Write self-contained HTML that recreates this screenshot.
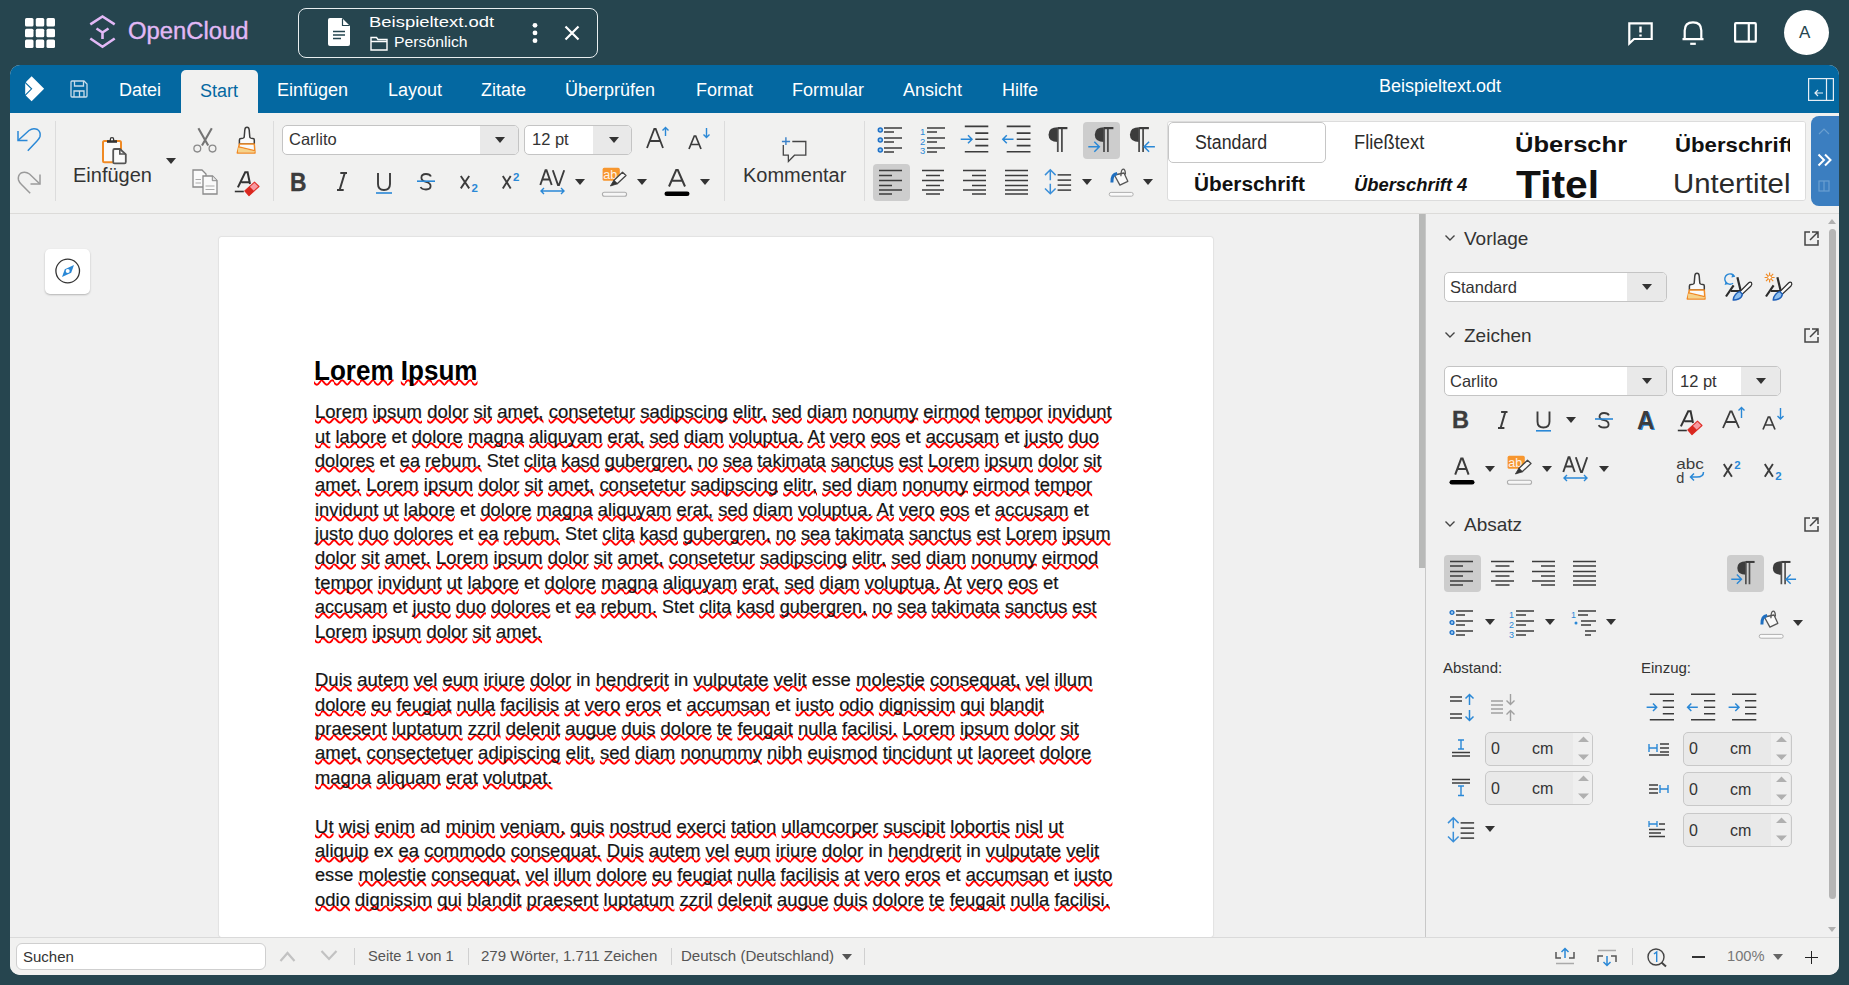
<!DOCTYPE html>
<html><head><meta charset="utf-8">
<style>
*{box-sizing:border-box;margin:0;padding:0}
html,body{width:1849px;height:985px;overflow:hidden;background:#26454f;font-family:"Liberation Sans",sans-serif;position:relative}
.a{position:absolute}
.t{position:absolute;white-space:nowrap;line-height:1}
svg{position:absolute;overflow:visible}
#frame{left:10px;top:65px;width:1829px;height:910px;border-radius:10px;overflow:hidden;background:#efefef}
#tabs{left:0;top:0;width:1829px;height:48px;background:#0468a1}
.tab{position:absolute;top:16px;font-size:18px;color:#fff;line-height:1;white-space:nowrap}
#toolbar{left:0;top:48px;width:1829px;height:100px;background:#f1f1f0;border-bottom:1px solid #d6d6d6}
.sep{position:absolute;width:1px;background:#dcdcdc}
.combo{position:absolute;background:#fff;border:1px solid #c4c4c4;border-radius:5px;overflow:hidden}
.combo .btn{position:absolute;right:0;top:0;bottom:0;background:#e9e9e9}
.tri{position:absolute;width:0;height:0;border-left:5px solid transparent;border-right:5px solid transparent;border-top:6px solid #333}
.doc{font-size:18.3px;color:#151515;-webkit-text-stroke:0.2px #151515}
.sq{text-decoration:underline wavy #f00;text-decoration-thickness:2.2px;text-underline-offset:-0.8px;text-decoration-skip-ink:none}
</style></head><body>
<!-- OpenCloud top bar -->
<svg style="left:25px;top:18px" width="30" height="30" viewBox="0 0 30 30">
<g fill="#fff">
<rect x="0" y="0" width="8.5" height="8.5" rx="1.5"/><rect x="10.75" y="0" width="8.5" height="8.5" rx="1.5"/><rect x="21.5" y="0" width="8.5" height="8.5" rx="1.5"/>
<rect x="0" y="10.75" width="8.5" height="8.5" rx="1.5"/><rect x="10.75" y="10.75" width="8.5" height="8.5" rx="1.5"/><rect x="21.5" y="10.75" width="8.5" height="8.5" rx="1.5"/>
<rect x="0" y="21.5" width="8.5" height="8.5" rx="1.5"/><rect x="10.75" y="21.5" width="8.5" height="8.5" rx="1.5"/><rect x="21.5" y="21.5" width="8.5" height="8.5" rx="1.5"/>
</g></svg>
<svg style="left:89px;top:15px" width="27" height="34" viewBox="0 0 27 34">
<g fill="none" stroke="#e2b8f6" stroke-width="2.6" stroke-linejoin="miter">
<path d="M1.3 9.3 L13.5 1.5 L25.7 9.3"/>
<path d="M1.3 23.5 L13.5 31.8 L25.7 23.5"/>
<path d="M7.5 13.5 L13.5 17.5 L19.5 13.5 M13.5 17.5 L13.5 24"/>
</g></svg>
<div class="t" style="left:127.5px;top:20.3px;font-size:23px;color:#e2b8f6;-webkit-text-stroke:0.35px #e2b8f6;transform-origin:0 0;transform:scaleX(1.035)">OpenCloud</div>

<!-- file tab -->
<div class="a" style="left:298px;top:8px;width:300px;height:50px;border:1.5px solid #e8eef0;border-radius:8px"></div>
<svg style="left:328px;top:18px" width="22" height="28" viewBox="0 0 22 28">
<path d="M2 0 H14 L22 8 V26 Q22 28 20 28 H2 Q0 28 0 26 V2 Q0 0 2 0 Z" fill="#fff"/>
<path d="M14 0 V8 H22" fill="#26454f" opacity="0"/>
<path d="M14.5 0.5 L14.5 7.5 L21.5 7.5" fill="none" stroke="#26454f" stroke-width="1.2"/>
<g stroke="#26454f" stroke-width="1.6"><path d="M5 13.5 H17 M5 17 H17 M5 20.5 H13"/></g>
</svg>
<div class="t" style="left:369px;top:14px;font-size:15px;color:#fff;transform-origin:0 0;transform:scaleX(1.23)">Beispieltext.odt</div>
<svg style="left:370px;top:36px" width="18" height="15" viewBox="0 0 18 15">
<path d="M1 1.5 H6.5 L8 3.5 H17 V14 H1 Z M1 5.5 H17" fill="none" stroke="#fff" stroke-width="1.4"/>
</svg>
<div class="t" style="left:394px;top:34px;font-size:15px;color:#fff;transform-origin:0 0;transform:scaleX(1.05)">Persönlich</div>
<svg style="left:530px;top:21px" width="10" height="24" viewBox="0 0 10 24">
<g fill="#fff"><circle cx="5" cy="4.3" r="2.4"/><circle cx="5" cy="11.9" r="2.4"/><circle cx="5" cy="19.7" r="2.4"/></g>
</svg>
<svg style="left:564px;top:25px" width="16" height="16" viewBox="0 0 16 16">
<path d="M1.5 1.5 L14.5 14.5 M14.5 1.5 L1.5 14.5" stroke="#fff" stroke-width="2.2" fill="none"/>
</svg>

<!-- right icons -->
<svg style="left:1628px;top:22px" width="25" height="23" viewBox="0 0 25 23">
<path d="M1.3 1.3 H23.7 V17 H6 L1.3 21.5 Z" fill="none" stroke="#fff" stroke-width="2.2" stroke-linejoin="miter"/>
<path d="M12.5 4.5 V10.5 M12.5 12.5 V14.5" stroke="#fff" stroke-width="2.4"/>
</svg>
<svg style="left:1681px;top:21px" width="24" height="25" viewBox="0 0 24 25">
<path d="M3.7 18.2 V9.5 Q3.7 1.3 12 1.3 Q20.3 1.3 20.3 9.5 V18.2 M1.5 18.2 H22.5" fill="none" stroke="#fff" stroke-width="2.2"/>
<path d="M9.2 22.8 H14.8" stroke="#fff" stroke-width="2.2"/>
</svg>
<svg style="left:1734px;top:22px" width="24" height="22" viewBox="0 0 24 22">
<rect x="1.1" y="1.1" width="20.7" height="18.6" rx="0.8" fill="none" stroke="#fff" stroke-width="2.2"/>
<path d="M14.8 1 V20" stroke="#fff" stroke-width="2.2"/>
</svg>
<div class="a" style="left:1784px;top:10px;width:45px;height:45px;border-radius:50%;background:#fff"></div>
<div class="t" style="left:1799px;top:24px;font-size:17px;color:#26454f">A</div>
<!-- frame backgrounds -->
<div class="a" style="left:10px;top:65px;width:1829px;height:910px;border-radius:10px;background:#f0f0f0"></div>
<div class="a" style="left:10px;top:65px;width:1829px;height:48px;border-radius:10px 10px 0 0;background:#0468a1"></div>
<div class="a" style="left:10px;top:113px;width:1829px;height:101px;background:#f1f1f0;border-bottom:1px solid #dcdbd9"></div>
<!-- collabora logo -->
<svg style="left:24px;top:75px" width="22" height="28" viewBox="0 0 22 28">
<path d="M7.6 1.3 L20.1 13.8 L7.6 26.3 L1.2 19.9 V7.7 Z" fill="#fff"/>
<path d="M0.6 6.8 L7.6 13.8 L0.6 20.8" fill="none" stroke="#0468a1" stroke-width="1.1"/>
</svg>
<!-- save icon -->
<svg style="left:70px;top:80px" width="18" height="18" viewBox="0 0 18 18">
<path d="M1 2 Q1 1 2 1 H14 L17 4 V16 Q17 17 16 17 H2 Q1 17 1 16 Z" fill="none" stroke="#c9dcea" stroke-width="1.3"/>
<path d="M4.5 1 V6 H13.5 V1 M4 17 V11 H14 V17 M9.5 11.5 V17" fill="none" stroke="#c9dcea" stroke-width="1.3"/>
</svg>
<div class="tab" style="left:119px;top:81px">Datei</div>
<div class="a" style="left:181px;top:70px;width:77px;height:43px;background:#f1f1f0;border-radius:5px 5px 0 0"></div>
<div class="tab" style="left:200px;top:82px;color:#0468a1">Start</div>
<div class="tab" style="left:277px;top:81px">Einfügen</div>
<div class="tab" style="left:388px;top:81px">Layout</div>
<div class="tab" style="left:481px;top:81px">Zitate</div>
<div class="tab" style="left:565px;top:81px">Überprüfen</div>
<div class="tab" style="left:696px;top:81px">Format</div>
<div class="tab" style="left:792px;top:81px">Formular</div>
<div class="tab" style="left:903px;top:81px">Ansicht</div>
<div class="tab" style="left:1002px;top:81px">Hilfe</div>
<div class="tab" style="left:1379px;top:77px">Beispieltext.odt</div>
<!-- sidebar toggle -->
<svg style="left:1808px;top:78px" width="26" height="23" viewBox="0 0 26 23">
<rect x="0.6" y="0.6" width="24.8" height="21.8" fill="none" stroke="#e6eef5" stroke-width="1.2"/>
<path d="M18.5 0.6 V22.4" stroke="#e6eef5" stroke-width="1.2"/>
<path d="M15 15 H7 M10 12 L7 15 L10 18" fill="none" stroke="#e6eef5" stroke-width="1.2"/>
</svg>
<!-- undo / redo -->
<svg style="left:17px;top:128px" width="25" height="24" viewBox="0 0 25 24">
<path d="M1 3 V12.5 H10.5" fill="none" stroke="#2a88d6" stroke-width="1.5"/>
<path d="M1.3 12.2 L12 2.5 Q16 -0.5 20.5 1.5 Q24 4 23 8.5 Q22.3 10.8 20 13 L10.8 22.8" fill="none" stroke="#2a88d6" stroke-width="1.5"/>
</svg>
<svg style="left:17px;top:171px" width="25" height="23" viewBox="0 0 25 23">
<path d="M23 3.5 V13 H13.5" fill="none" stroke="#9a9a9a" stroke-width="1.5"/>
<path d="M22.7 12.7 L12.5 3 Q8.5 0 4 2 Q0.6 4.5 1.5 9 Q2.2 11.3 4.5 13.5 L13.2 22.3" fill="none" stroke="#9a9a9a" stroke-width="1.5"/>
</svg>
<div class="sep" style="left:55px;top:121px;height:80px"></div>
<!-- paste -->
<svg style="left:96px;top:132px" width="34" height="34" viewBox="0 0 34 34">
<rect x="7" y="9" width="18" height="21.3" rx="1.5" fill="#fafafa" stroke="#f08a24" stroke-width="2"/>
<rect x="11" y="8.2" width="10" height="2.6" fill="#333"/>
<circle cx="16" cy="7.4" r="1.7" fill="#fafafa" stroke="#333" stroke-width="1.3"/>
<path d="M18.6 17 H23.9 L29.8 22.3 V30 Q29.8 31.4 28.4 31.4 H18.6 Q17.2 31.4 17.2 30 V18.4 Q17.2 17 18.6 17 Z" fill="#fafafa" stroke="#555" stroke-width="1.8"/>
<path d="M23.8 17 V22 H29.8" fill="none" stroke="#555" stroke-width="1.6"/>
</svg>
<div class="t" style="left:73px;top:165px;font-size:20px;color:#333">Einfügen</div>
<div class="tri" style="left:166px;top:158px;border-top-color:#333"></div>
<!-- cut -->
<svg style="left:188px;top:122px" width="34" height="34" viewBox="0 0 34 34">
<path d="M10.4 6.2 L20.2 23.6 M23.8 6.2 L14 23.4" fill="none" stroke="#747474" stroke-width="2.1"/>
<circle cx="9.3" cy="26.6" r="3.4" fill="none" stroke="#8a8a8a" stroke-width="1.3"/>
<circle cx="24.5" cy="26.6" r="3.4" fill="none" stroke="#8a8a8a" stroke-width="1.3"/>
</svg>
<!-- clone brush -->
<svg style="left:236px;top:125.5px" width="20" height="28" viewBox="0 0 20 28">
<path d="M8.2 11 Q8.5 8 8.8 4 Q9 1.3 11 1.3 Q13 1.3 13.2 4 Q13.5 8 13.8 11 Q14 12.5 17 12.5 Q18.3 12.5 18.3 14 V18 H3.4 V14 Q3.4 12.5 5 12.5 Q8 12.5 8.2 11 Z" fill="#fafafa" stroke="#3c3c3c" stroke-width="1.5" stroke-linejoin="round"/>
<path d="M3.4 18 H18.3 L19 27 H1.3 Z" fill="#fafafa" stroke="#f08a24" stroke-width="1.5" stroke-linejoin="round"/>
<path d="M2.2 21.5 L18.6 25 L18.8 26.3 H2 Z" fill="#f6d38a"/>
<path d="M2.8 20.8 L18.6 24.6" stroke="#f08a24" stroke-width="1.3"/>
</svg>
<!-- copy -->
<svg style="left:192px;top:169px" width="27" height="27" viewBox="0 0 27 27">
<path d="M1 1 H10 L14 5 V18 H1 Z" fill="#fafafa" stroke="#8a8a8a" stroke-width="1.3"/>
<path d="M3.5 10.5 H9 M3.5 14 H9" stroke="#aaa" stroke-width="1.2"/>
<path d="M11 7 H20.5 L25 11.5 V25 H11 Z" fill="#fafafa" stroke="#8a8a8a" stroke-width="1.3"/>
<path d="M20.3 7 V11.7 H25" fill="#e6e6e6" stroke="#8a8a8a" stroke-width="1"/>
<path d="M13.5 17 H22.5 M13.5 20.5 H22.5" stroke="#aaa" stroke-width="1.2"/>
</svg>
<!-- clear formatting -->
<svg style="left:230px;top:166px" width="34" height="34" viewBox="0 0 34 34">
<path d="M7.9 21.4 L15.2 6.2 H17.6 L20 18 M11.4 16.2 H19.7" fill="none" stroke="#333" stroke-width="2"/>
<path d="M4.8 25.5 H13.8" stroke="#333" stroke-width="1.6"/>
<path d="M14.8 24.9 L24.5 16.2 L29 20.5 L19 29.7 Z" fill="#f79aa0" stroke="#e0302a" stroke-width="1.1" stroke-linejoin="round"/>
<path d="M14.8 24.9 L19.6 20.6 L24 25.1 L19 29.7 Z" fill="#d9281f"/>
</svg>
<div class="sep" style="left:273px;top:121px;height:80px"></div>
<!-- font name combo -->
<div class="combo" style="left:282px;top:125px;width:237px;height:30px"><div class="btn" style="width:38px"></div></div>
<div class="tri" style="left:495px;top:137px"></div>
<div class="t" style="left:289px;top:131px;font-size:16.5px;color:#333">Carlito</div>
<!-- font size combo -->
<div class="combo" style="left:524px;top:125px;width:108px;height:30px"><div class="btn" style="width:38px"></div></div>
<div class="tri" style="left:609px;top:137px"></div>
<div class="t" style="left:532px;top:131px;font-size:16.5px;color:#333">12 pt</div>
<!-- grow / shrink -->
<svg style="left:646px;top:126px" width="23" height="23" viewBox="0 0 23 23">
<path d="M1 22 L8.3 3 H9.7 L17 22 M4 15 H14" fill="none" stroke="#3c3c3c" stroke-width="1.8"/>
<path d="M19.5 10 V1.5 M16.5 4.5 L19.5 1.5 L22.5 4.5" fill="none" stroke="#2a88d6" stroke-width="1.4"/>
</svg>
<svg style="left:688px;top:127px" width="23" height="23" viewBox="0 0 23 23">
<path d="M1 22 L6.3 9 H7.7 L13 22 M3.2 17.5 H11" fill="none" stroke="#3c3c3c" stroke-width="1.7"/>
<path d="M18.5 1 V10.5 M15.5 7.5 L18.5 10.5 L21.5 7.5" fill="none" stroke="#2a88d6" stroke-width="1.4"/>
</svg>
<!-- Bold .. -->
<div class="t" style="left:290.2px;top:169.5px;font-size:25.6px;font-weight:bold;color:#3c3c3c;-webkit-text-stroke:0.4px #3c3c3c;transform-origin:0 0;transform:scaleX(0.891)">B</div>
<svg style="left:337px;top:172px" width="10" height="19" viewBox="0 0 10 19"><path d="M7.8 1 L2.6 18.0 M3.3 1 H10.0 M0 18.0 H6.7" fill="none" stroke="#3c3c3c" stroke-width="2"/></svg>
<svg style="left:375px;top:172px" width="18" height="22" viewBox="0 0 18 22"><path d="M3 1 V12 Q3 18 9 18 Q15 18 15 12 V1" fill="none" stroke="#3c3c3c" stroke-width="1.9"/><path d="M1 21 H17" stroke="#2a88d6" stroke-width="1.6"/></svg>
<svg style="left:417px;top:173px" width="18" height="17.5" viewBox="0 0 18 17.5"><path d="M13.9 3.5 Q12.9 1 9.0 1 Q4.4 1 4.4 4.7 Q4.4 7.9 9.0 8.8 Q13.6 9.8 13.6 13.1 Q13.6 16.5 9.0 16.5 Q4.6 16.5 3.6 14.0" fill="none" stroke="#3c3c3c" stroke-width="1.8"/><path d="M0 8.2 H18" stroke="#2a88d6" stroke-width="1.6"/></svg>
<svg style="left:460px;top:176px" width="20" height="16.4" viewBox="0 0 20 16.4"><path d="M0.8 0 L9.2 12.4 M9.2 0 L0.8 12.4" fill="none" stroke="#3c3c3c" stroke-width="1.9"/><text x="11.5" y="16.2" font-family="Liberation Sans" font-weight="bold" font-size="11.5" fill="#2a88d6">2</text></svg>
<svg style="left:502px;top:176px" width="19.5" height="16.4" viewBox="0 0 19.5 16.4"><path d="M0.8 0 L8.7 12.4 M8.7 0 L0.8 12.4" fill="none" stroke="#3c3c3c" stroke-width="1.9"/><text x="11.0" y="5.2" font-family="Liberation Sans" font-weight="bold" font-size="11.5" fill="#2a88d6">2</text></svg>
<svg style="left:539px;top:169px" width="27" height="26" viewBox="0 0 27 26">
<path d="M1.3 16 L6.5 1.3 H7.5 L12.7 16 M3.4 10.5 H10.6 M13.8 1.3 L19 16 H20 L25.2 1.3" fill="none" stroke="#3c3c3c" stroke-width="1.9"/>
<path d="M2 22 H25 M5 19 L2 22 L5 25 M22 19 L25 22 L22 25" fill="none" stroke="#2a88d6" stroke-width="1.4"/>
</svg>
<div class="tri" style="left:575px;top:179px"></div>
<svg style="left:596px;top:164px" width="34" height="34" viewBox="0 0 34 34">
<rect x="6.6" y="3.8" width="17.2" height="13" rx="1.6" fill="#f7962e"/>
<text x="7.3" y="15" font-family="Liberation Sans" font-size="12.5" fill="#fdf3ea" textLength="14" lengthAdjust="spacingAndGlyphs">ab</text>
<path d="M26.5 8.2 L30 11.5 L21.2 19.8 L17.8 16.5 Z" fill="#fafafa" stroke="#444" stroke-width="1.3" stroke-linejoin="round"/>
<path d="M17.6 16.7 L21 19.9 L14.4 22 Z" fill="#333" stroke="#333" stroke-width="0.8" stroke-linejoin="round"/>
<rect x="6.4" y="28.3" width="24.2" height="4" rx="2" fill="#f6f6f6" stroke="#adadad" stroke-width="1.1"/>
</svg>
<div class="tri" style="left:637px;top:179px"></div>
<svg style="left:664px;top:169px" width="26" height="28" viewBox="0 0 26 28">
<path d="M5 17.5 L12.2 1 H13.8 L21 17.5 M8 11.8 H18" fill="none" stroke="#3c3c3c" stroke-width="2"/>
<rect x="0.5" y="22.5" width="25" height="4.6" rx="2.3" fill="#000"/>
</svg>
<div class="tri" style="left:700px;top:179px"></div>
<div class="sep" style="left:724px;top:121px;height:80px"></div>
<!-- comment -->
<svg style="left:774px;top:130px" width="40" height="36" viewBox="0 0 40 36">
<path d="M18.3 11.5 H31.8 V25.2 H20.5 L14.4 31.4 L14.3 25.2 H9.3 V15" fill="none" stroke="#444" stroke-width="1.3"/>
<path d="M11.9 7.3 V15 M7.9 11.5 H16.1" stroke="#3a80c8" stroke-width="1.4"/>
</svg>
<div class="t" style="left:743px;top:165px;font-size:20px;color:#333">Kommentar</div>
<div class="sep" style="left:864px;top:121px;height:80px"></div>
<!-- paragraph row 1 -->
<svg style="left:877px;top:126px" width="27" height="28" viewBox="0 0 27 28">
<g fill="#9ccbf2" stroke="#1f72c8" stroke-width="1.5"><circle cx="3.3" cy="4" r="2"/><circle cx="3.3" cy="14" r="2"/><circle cx="3.3" cy="24" r="2"/></g>
<g stroke="#3c3c3c" stroke-width="1.6"><path d="M7 2 H25 M7 6 H17 M7 12 H25 M7 16 H17 M7 22 H25 M7 26 H17"/></g>
</svg>
<svg style="left:920px;top:126px" width="26" height="28" viewBox="0 0 26 28">
<text x="0" y="9" font-family="Liberation Sans" font-size="9.5" fill="#2a88d6">1</text>
<text x="0" y="19" font-family="Liberation Sans" font-size="9.5" fill="#2a88d6">2</text>
<text x="0" y="28" font-family="Liberation Sans" font-size="9.5" fill="#2a88d6">3</text>
<g stroke="#3c3c3c" stroke-width="1.6"><path d="M7 2 H25 M7 6 H17 M7 12 H25 M7 16 H17 M7 22 H25 M7 26 H17"/></g>
</svg>
<svg style="left:960px;top:125px" width="29" height="29" viewBox="0 0 29 29">
<g stroke="#3c3c3c" stroke-width="1.6"><path d="M4.8 1.4 H28.3 M15.3 8.1 H28.3 M15.3 14.3 H28.3 M15.3 20.6 H28.3 M4.8 26.8 H28.3"/></g>
<path d="M0.7 14.3 H12 M8 10.3 L12 14.3 L8 18.3" fill="none" stroke="#2a88d6" stroke-width="1.5"/>
</svg>
<svg style="left:1002px;top:125px" width="29" height="29" viewBox="0 0 29 29">
<g stroke="#3c3c3c" stroke-width="1.6"><path d="M4.7 1.4 H28.5 M14.7 8.1 H28.5 M14.7 14.3 H28.5 M14.7 20.6 H28.5 M4.7 26.8 H28.5"/></g>
<path d="M0.8 14.3 H11.5 M4.8 10.3 L0.8 14.3 L4.8 18.3" fill="none" stroke="#2a88d6" stroke-width="1.5"/>
</svg>
<svg style="left:1047px;top:126px" width="28" height="28" viewBox="0 0 28 28"><path d="M10.9 1.3 Q1.5 1.3 1.5 8.7 Q1.5 16 10.9 16 Z" fill="#3c3c3c"/><path d="M10.8 2 V26.1 M14.9 2 V26.1" stroke="#4f4f4f" stroke-width="1.8"/><path d="M10.8 2.1 H20.4" stroke="#3c3c3c" stroke-width="2.2"/></svg>
<div class="a" style="left:1083px;top:122px;width:37px;height:37px;background:#cdcdcd;border-radius:4px"></div>
<svg style="left:1088px;top:126px" width="28" height="28" viewBox="0 0 28 28"><path d="M16.2 1.3 Q6.8 1.3 6.8 8.7 Q6.8 16 16.2 16 Z" fill="#3c3c3c"/><path d="M16 2 V26.1 M19.9 2 V26.1" stroke="#4f4f4f" stroke-width="1.8"/><path d="M16 2.1 H25.4" stroke="#3c3c3c" stroke-width="2.2"/><path d="M0.3 20.7 H11.3 M6.3 15.7 L11.3 20.7 L6.3 25.7" fill="none" stroke="#2a88d6" stroke-width="1.5"/></svg>
<svg style="left:1129px;top:126px" width="28" height="28" viewBox="0 0 28 28"><path d="M10.4 1.3 Q0.9 1.3 0.9 8.7 Q0.9 16 10.4 16 Z" fill="#3c3c3c"/><path d="M10.1 2 V26.1 M14.1 2 V26.1" stroke="#4f4f4f" stroke-width="1.8"/><path d="M10.1 2.1 H19.9" stroke="#3c3c3c" stroke-width="2.2"/><path d="M15.1 20.7 H25.9 M20.1 15.7 L15.1 20.7 L20.1 25.7" fill="none" stroke="#2a88d6" stroke-width="1.5"/></svg>
<!-- paragraph row 2 -->
<div class="a" style="left:873px;top:164px;width:37px;height:37px;background:#cdcdcd;border-radius:4px"></div>
<svg style="left:878px;top:169px" width="25" height="26" viewBox="0 0 25 26">
<g stroke="#3c3c3c" stroke-width="1.7"><path d="M1 1.5 H24 M1 6.5 H14 M1 11.5 H24 M1 16.5 H14 M1 21 H24 M1 25 H14"/></g>
</svg>
<svg style="left:921px;top:169px" width="24" height="26" viewBox="0 0 24 26">
<g stroke="#3c3c3c" stroke-width="1.7"><path d="M1 1.5 H23 M5 6.5 H19 M1 11.5 H23 M5 16.5 H19 M1 21 H23 M5 25 H19"/></g>
</svg>
<svg style="left:962px;top:169px" width="25" height="26" viewBox="0 0 25 26">
<g stroke="#3c3c3c" stroke-width="1.7"><path d="M1 1.5 H24 M10 6.5 H24 M1 11.5 H24 M10 16.5 H24 M1 21 H24 M10 25 H24"/></g>
</svg>
<svg style="left:1004px;top:169px" width="25" height="26" viewBox="0 0 25 26">
<g stroke="#3c3c3c" stroke-width="1.7"><path d="M1 1.5 H24 M1 6.5 H24 M1 11.5 H24 M1 16.5 H24 M1 21 H24 M1 25 H24"/></g>
</svg>
<svg style="left:1044px;top:168px" width="28" height="28" viewBox="0 0 28 28">
<path d="M6.3 1.8 V12.3 M1 7.1 L6.3 1.8 L11.6 7.1 M6.3 15.7 V25.8 M1 20.5 L6.3 25.8 L11.6 20.5" fill="none" stroke="#3a8fd9" stroke-width="1.5"/>
<g stroke="#555" stroke-width="1.7"><path d="M13.6 6.9 H27.1 M13.6 12.1 H27.1 M13.6 17.2 H27.1 M13.6 22.1 H27.1"/></g>
</svg>
<div class="tri" style="left:1082px;top:179px"></div>
<svg style="left:1104px;top:164px" width="34" height="34" viewBox="0 0 34 34">
<path d="M10.4 11 L20 9 L23.8 17.3 L15.9 21.1 Z" fill="#fafafa" stroke="#555" stroke-width="1.3" stroke-linejoin="round"/>
<path d="M16.9 12.3 Q17 5.2 19.2 5.2 Q21.4 5.2 21.4 10.4" fill="none" stroke="#555" stroke-width="1.3"/>
<path d="M7.9 18.5 Q7.6 10.2 13.1 9.6" fill="none" stroke="#1f6fc0" stroke-width="3"/>
<rect x="5.2" y="28.4" width="24" height="3.8" rx="1.9" fill="#fafafa" stroke="#b0b0b0" stroke-width="1"/>
</svg>
<div class="tri" style="left:1143px;top:179px"></div>
<!-- styles gallery -->
<div class="a" style="left:1167px;top:121px;width:639px;height:80px;background:#fff;border:1px solid #dcdcdc;border-radius:3px;overflow:hidden">
<div class="a" style="left:0px;top:0px;width:158px;height:41px;border:1px solid #c6c6c6;border-radius:5px"></div>
<div class="t" style="left:26.6px;top:10.9px;font-size:19.4px;color:#2b2b2b;transform-origin:0 0;transform:scaleX(0.916)">Standard</div>
<div class="t" style="left:186.3px;top:10.9px;font-size:19.4px;color:#2b2b2b;transform-origin:0 0;transform:scaleX(0.945)">Fließtext</div>
<div class="t" style="left:346.6px;top:12.0px;font-size:22.4px;font-weight:bold;color:#111;transform-origin:0 0;transform:scaleX(1.140)">Überschr</div>
<div class="t" style="left:506.5px;top:11.7px;font-size:21.0px;font-weight:bold;color:#111;transform-origin:0 0;transform:scaleX(1.057)">Überschrift</div>
<div class="t" style="left:26.0px;top:52.4px;font-size:20.0px;font-weight:bold;color:#111;transform-origin:0 0;transform:scaleX(1.040)">Überschrift</div>
<div class="t" style="left:186.2px;top:53.2px;font-size:19.0px;font-weight:bold;font-style:italic;color:#111;transform-origin:0 0;transform:scaleX(0.967)">Überschrift 4</div>
<div class="t" style="left:347.7px;top:42.5px;font-size:39.0px;font-weight:bold;color:#111;transform-origin:0 0;transform:scaleX(1.046)">Titel</div>
<div class="t" style="left:505.4px;top:48.7px;font-size:27.0px;color:#2b2b2b;transform-origin:0 0;transform:scaleX(1.087)">Untertitel</div>
<div class="a" style="left:622px;top:0;width:20px;height:80px;background:#fff"></div>
</div>
<!-- gallery side button -->
<div class="a" style="left:1811px;top:116px;width:28px;height:90px;background:#3b7ec0;border-radius:8px 0 0 8px"></div>
<svg style="left:1817px;top:153px" width="16" height="14" viewBox="0 0 16 14">
<path d="M1.5 1.5 L7 7 L1.5 12.5 M8 1.5 L13.5 7 L8 12.5" fill="none" stroke="#fff" stroke-width="2"/>
</svg>
<svg style="left:1818px;top:128px" width="12" height="8" viewBox="0 0 12 8"><path d="M1 6 L6 1 L11 6" fill="none" stroke="#6a9fd0" stroke-width="1.2"/></svg>
<svg style="left:1818px;top:180px" width="12" height="12" viewBox="0 0 12 12"><rect x="1" y="1" width="10" height="10" fill="none" stroke="#6a9fd0" stroke-width="1.2"/><path d="M6 1 V11" stroke="#6a9fd0" stroke-width="1.2"/></svg>
<!-- document page -->
<div class="a" style="left:219px;top:237px;width:994px;height:700px;background:#fff;border-radius:2px;box-shadow:0 0 1.5px rgba(0,0,0,0.28)"></div>
<div class="t" style="left:314px;top:357.1px;font-size:28px;font-weight:bold;color:#000;transform-origin:0 0;transform:scaleX(0.930)"><span class="sq">Lorem</span> <span class="sq">Ipsum</span></div>
<div class="t doc" style="left:315.0px;top:403.2px;transform-origin:0 0;transform:scaleX(1.0126)"><span class="sq">Lorem</span> <span class="sq">ipsum</span> <span class="sq">dolor</span> <span class="sq">sit</span> <span class="sq">amet,</span> <span class="sq">consetetur</span> <span class="sq">sadipscing</span> <span class="sq">elitr,</span> <span class="sq">sed</span> <span class="sq">diam</span> <span class="sq">nonumy</span> <span class="sq">eirmod</span> <span class="sq">tempor</span> <span class="sq">invidunt</span></div>
<div class="t doc" style="left:315.0px;top:427.5px;transform-origin:0 0;transform:scaleX(1.0028)"><span class="sq">ut</span> <span class="sq">labore</span> et <span class="sq">dolore</span> <span class="sq">magna</span> <span class="sq">aliquyam</span> <span class="sq">erat,</span> <span class="sq">sed</span> <span class="sq">diam</span> <span class="sq">voluptua.</span> <span class="sq">At</span> <span class="sq">vero</span> <span class="sq">eos</span> et <span class="sq">accusam</span> et <span class="sq">justo</span> <span class="sq">duo</span></div>
<div class="t doc" style="left:315.0px;top:451.9px;transform-origin:0 0;transform:scaleX(0.9933)"><span class="sq">dolores</span> et <span class="sq">ea</span> <span class="sq">rebum.</span> Stet <span class="sq">clita</span> <span class="sq">kasd</span> <span class="sq">gubergren,</span> <span class="sq">no</span> <span class="sq">sea</span> <span class="sq">takimata</span> <span class="sq">sanctus</span> <span class="sq">est</span> <span class="sq">Lorem</span> <span class="sq">ipsum</span> <span class="sq">dolor</span> <span class="sq">sit</span></div>
<div class="t doc" style="left:315.0px;top:476.3px;transform-origin:0 0;transform:scaleX(1.0100)"><span class="sq">amet.</span> <span class="sq">Lorem</span> <span class="sq">ipsum</span> <span class="sq">dolor</span> <span class="sq">sit</span> <span class="sq">amet,</span> <span class="sq">consetetur</span> <span class="sq">sadipscing</span> <span class="sq">elitr,</span> <span class="sq">sed</span> <span class="sq">diam</span> <span class="sq">nonumy</span> <span class="sq">eirmod</span> <span class="sq">tempor</span></div>
<div class="t doc" style="left:315.0px;top:500.7px;transform-origin:0 0;transform:scaleX(1.0043)"><span class="sq">invidunt</span> <span class="sq">ut</span> <span class="sq">labore</span> et <span class="sq">dolore</span> <span class="sq">magna</span> <span class="sq">aliquyam</span> <span class="sq">erat,</span> <span class="sq">sed</span> <span class="sq">diam</span> <span class="sq">voluptua.</span> <span class="sq">At</span> <span class="sq">vero</span> <span class="sq">eos</span> et <span class="sq">accusam</span> et</div>
<div class="t doc" style="left:315.0px;top:525.0px;transform-origin:0 0;transform:scaleX(0.9918)"><span class="sq">justo</span> <span class="sq">duo</span> <span class="sq">dolores</span> et <span class="sq">ea</span> <span class="sq">rebum.</span> Stet <span class="sq">clita</span> <span class="sq">kasd</span> <span class="sq">gubergren,</span> <span class="sq">no</span> <span class="sq">sea</span> <span class="sq">takimata</span> <span class="sq">sanctus</span> <span class="sq">est</span> <span class="sq">Lorem</span> <span class="sq">ipsum</span></div>
<div class="t doc" style="left:315.0px;top:549.4px;transform-origin:0 0;transform:scaleX(1.0086)"><span class="sq">dolor</span> <span class="sq">sit</span> <span class="sq">amet.</span> <span class="sq">Lorem</span> <span class="sq">ipsum</span> <span class="sq">dolor</span> <span class="sq">sit</span> <span class="sq">amet,</span> <span class="sq">consetetur</span> <span class="sq">sadipscing</span> <span class="sq">elitr,</span> <span class="sq">sed</span> <span class="sq">diam</span> <span class="sq">nonumy</span> <span class="sq">eirmod</span></div>
<div class="t doc" style="left:315.0px;top:573.8px;transform-origin:0 0;transform:scaleX(1.0128)"><span class="sq">tempor</span> <span class="sq">invidunt</span> <span class="sq">ut</span> <span class="sq">labore</span> et <span class="sq">dolore</span> <span class="sq">magna</span> <span class="sq">aliquyam</span> <span class="sq">erat,</span> <span class="sq">sed</span> <span class="sq">diam</span> <span class="sq">voluptua.</span> <span class="sq">At</span> <span class="sq">vero</span> <span class="sq">eos</span> et</div>
<div class="t doc" style="left:315.0px;top:598.1px;transform-origin:0 0;transform:scaleX(0.9894)"><span class="sq">accusam</span> et <span class="sq">justo</span> <span class="sq">duo</span> <span class="sq">dolores</span> et <span class="sq">ea</span> <span class="sq">rebum.</span> Stet <span class="sq">clita</span> <span class="sq">kasd</span> <span class="sq">gubergren,</span> <span class="sq">no</span> <span class="sq">sea</span> <span class="sq">takimata</span> <span class="sq">sanctus</span> <span class="sq">est</span></div>
<div class="t doc" style="left:315.0px;top:622.5px;transform-origin:0 0;transform:scaleX(1.0064)"><span class="sq">Lorem</span> <span class="sq">ipsum</span> <span class="sq">dolor</span> <span class="sq">sit</span> <span class="sq">amet.</span></div>
<div class="t doc" style="left:315.0px;top:671.3px;transform-origin:0 0;transform:scaleX(1.0119)"><span class="sq">Duis</span> <span class="sq">autem</span> <span class="sq">vel</span> <span class="sq">eum</span> <span class="sq">iriure</span> <span class="sq">dolor</span> in <span class="sq">hendrerit</span> in <span class="sq">vulputate</span> <span class="sq">velit</span> esse <span class="sq">molestie</span> <span class="sq">consequat,</span> <span class="sq">vel</span> <span class="sq">illum</span></div>
<div class="t doc" style="left:315.0px;top:695.6px;transform-origin:0 0;transform:scaleX(1.0012)"><span class="sq">dolore</span> <span class="sq">eu</span> <span class="sq">feugiat</span> <span class="sq">nulla</span> <span class="sq">facilisis</span> <span class="sq">at</span> <span class="sq">vero</span> <span class="sq">eros</span> et <span class="sq">accumsan</span> et <span class="sq">iusto</span> <span class="sq">odio</span> <span class="sq">dignissim</span> <span class="sq">qui</span> <span class="sq">blandit</span></div>
<div class="t doc" style="left:315.0px;top:720.0px;transform-origin:0 0;transform:scaleX(1.0086)"><span class="sq">praesent</span> <span class="sq">luptatum</span> <span class="sq">zzril</span> <span class="sq">delenit</span> <span class="sq">augue</span> <span class="sq">duis</span> <span class="sq">dolore</span> <span class="sq">te</span> <span class="sq">feugait</span> <span class="sq">nulla</span> <span class="sq">facilisi.</span> <span class="sq">Lorem</span> <span class="sq">ipsum</span> <span class="sq">dolor</span> <span class="sq">sit</span></div>
<div class="t doc" style="left:315.0px;top:744.4px;transform-origin:0 0;transform:scaleX(1.0155)"><span class="sq">amet,</span> <span class="sq">consectetuer</span> <span class="sq">adipiscing</span> <span class="sq">elit,</span> <span class="sq">sed</span> <span class="sq">diam</span> <span class="sq">nonummy</span> <span class="sq">nibh</span> <span class="sq">euismod</span> <span class="sq">tincidunt</span> <span class="sq">ut</span> <span class="sq">laoreet</span> <span class="sq">dolore</span></div>
<div class="t doc" style="left:315.0px;top:768.8px;transform-origin:0 0;transform:scaleX(1.0069)"><span class="sq">magna</span> <span class="sq">aliquam</span> <span class="sq">erat</span> <span class="sq">volutpat.</span></div>
<div class="t doc" style="left:315.0px;top:817.5px;transform-origin:0 0;transform:scaleX(1.0131)"><span class="sq">Ut</span> <span class="sq">wisi</span> <span class="sq">enim</span> ad <span class="sq">minim</span> <span class="sq">veniam,</span> <span class="sq">quis</span> <span class="sq">nostrud</span> <span class="sq">exerci</span> <span class="sq">tation</span> <span class="sq">ullamcorper</span> <span class="sq">suscipit</span> <span class="sq">lobortis</span> <span class="sq">nisl</span> <span class="sq">ut</span></div>
<div class="t doc" style="left:315.0px;top:841.9px;transform-origin:0 0;transform:scaleX(1.0138)"><span class="sq">aliquip</span> ex <span class="sq">ea</span> <span class="sq">commodo</span> <span class="sq">consequat.</span> <span class="sq">Duis</span> <span class="sq">autem</span> <span class="sq">vel</span> <span class="sq">eum</span> <span class="sq">iriure</span> <span class="sq">dolor</span> in <span class="sq">hendrerit</span> in <span class="sq">vulputate</span> <span class="sq">velit</span></div>
<div class="t doc" style="left:315.0px;top:866.2px;transform-origin:0 0;transform:scaleX(0.9955)">esse <span class="sq">molestie</span> <span class="sq">consequat,</span> <span class="sq">vel</span> <span class="sq">illum</span> <span class="sq">dolore</span> <span class="sq">eu</span> <span class="sq">feugiat</span> <span class="sq">nulla</span> <span class="sq">facilisis</span> <span class="sq">at</span> <span class="sq">vero</span> <span class="sq">eros</span> et <span class="sq">accumsan</span> et <span class="sq">iusto</span></div>
<div class="t doc" style="left:315.0px;top:890.6px;transform-origin:0 0;transform:scaleX(1.0101)"><span class="sq">odio</span> <span class="sq">dignissim</span> <span class="sq">qui</span> <span class="sq">blandit</span> <span class="sq">praesent</span> <span class="sq">luptatum</span> <span class="sq">zzril</span> <span class="sq">delenit</span> <span class="sq">augue</span> <span class="sq">duis</span> <span class="sq">dolore</span> <span class="sq">te</span> <span class="sq">feugait</span> <span class="sq">nulla</span> <span class="sq">facilisi.</span></div>
<!-- navigator button -->
<div class="a" style="left:45px;top:249px;width:45px;height:45px;background:#fff;border-radius:5px;box-shadow:0 1px 2px rgba(0,0,0,0.25)"></div>
<svg style="left:55px;top:258px" width="26" height="26" viewBox="0 0 26 26">
<circle cx="12.7" cy="13" r="11.8" fill="none" stroke="#333" stroke-width="1.3"/>
<path d="M19 7 L16.2 14.8 L7 19 L9.8 11.2 Z" fill="#2a88d6"/>
<circle cx="12.7" cy="13" r="2" fill="#fff"/>
</svg>
<!-- doc scrollbar thumb -->
<div class="a" style="left:1419px;top:214px;width:7px;height:354px;background:#b8b9b8"></div>
<!-- sidebar -->
<div class="a" style="left:1425px;top:214px;width:414px;height:723px;background:#f0f0f0;border-left:1px solid #c8c8c8"></div>
<div class="a" style="left:1829px;top:229px;width:7px;height:670px;background:#b5b5b5;border-radius:3.5px"></div>
<div class="tri" style="left:1828px;top:219px;border-top:0;border-left-width:4.5px;border-right-width:4.5px;border-bottom:5px solid #b0b0b0"></div>
<div class="tri" style="left:1828px;top:927px;border-left-width:4.5px;border-right-width:4.5px;border-top:5px solid #b0b0b0"></div>

<!-- Vorlage -->
<svg style="left:1444px;top:234px" width="12" height="8" viewBox="0 0 12 8"><path d="M1.5 1.5 L6 6 L10.5 1.5" fill="none" stroke="#444" stroke-width="1.4"/></svg>
<div class="t" style="left:1464px;top:229px;font-size:19px;color:#333">Vorlage</div>
<svg style="left:1804px;top:231px" width="15" height="15" viewBox="0 0 15 15"><path d="M6 1 H1 V14 H14 V9" fill="none" stroke="#444" stroke-width="1.5"/><path d="M8 1 H14 V7 M14 1 L6 9" fill="none" stroke="#444" stroke-width="1.5"/></svg>
<div class="combo" style="left:1444px;top:272px;width:223px;height:30px"><div class="btn" style="width:39px"></div></div>
<div class="tri" style="left:1642px;top:284px"></div>
<div class="t" style="left:1450px;top:279px;font-size:16.5px;color:#333">Standard</div>
<svg style="left:1686px;top:272px" width="20" height="28" viewBox="0 0 20 28">
<path d="M8.2 11 Q8.5 8 8.8 4 Q9 1.3 11 1.3 Q13 1.3 13.2 4 Q13.5 8 13.8 11 Q14 12.5 17 12.5 Q18.3 12.5 18.3 14 V18 H3.4 V14 Q3.4 12.5 5 12.5 Q8 12.5 8.2 11 Z" fill="#fafafa" stroke="#3c3c3c" stroke-width="1.5" stroke-linejoin="round"/>
<path d="M3.4 18 H18.3 L19 27 H1.3 Z" fill="#fafafa" stroke="#f08a24" stroke-width="1.5" stroke-linejoin="round"/>
<path d="M2.2 21.5 L18.6 25 L18.8 26.3 H2 Z" fill="#f6d38a"/>
<path d="M2.8 20.8 L18.6 24.6" stroke="#f08a24" stroke-width="1.3"/>
</svg>
<svg style="left:1720px;top:272px" width="34" height="30" viewBox="0 0 34 30">
<path d="M14.5 4.5 A5.2 5.2 0 1 0 13 11.3" fill="none" stroke="#2a88d6" stroke-width="1.4"/><path d="M12.3 1.5 L15.2 4.8 L11.5 5.6 Z M5.8 9.2 L4.6 13 L8.2 12 Z" fill="#2a88d6"/>
<path d="M6 24.5 L13.6 13.4 M17.4 5.3 L20.7 19 H11" fill="none" stroke="#2d2d2d" stroke-width="2.2"/>
<path d="M31.4 10.5 Q32.5 12 31 14 L22 22.5 L19.5 20 L28.5 11 Q30 9.5 31.4 10.5 Z" fill="#fafafa" stroke="#2d2d2d" stroke-width="1.2"/>
<path d="M19.8 19.6 L22.4 22.2 Q22 25.5 18.5 27 Q15.5 28.3 13.2 28 Q13.3 25 15.5 22.5 Q17.5 20 19.8 19.6 Z" fill="#8fc0ef" stroke="#1f5fb8" stroke-width="1.4"/>
</svg>
<svg style="left:1760px;top:272px" width="34" height="30" viewBox="0 0 34 30">
<g stroke="#f08a24" stroke-width="1.2"><path d="M9.6 0.5 V3.2 M9.6 7.8 V10.5 M4.6 5.5 H7.3 M11.9 5.5 H14.6 M6 1.9 L7.9 3.8 M11.3 7.2 L13.2 9.1 M13.2 1.9 L11.3 3.8 M7.9 7.2 L6 9.1"/></g><circle cx="9.6" cy="5.5" r="2" fill="#fafafa" stroke="#f08a24" stroke-width="1"/>
<path d="M6 24.5 L13.6 13.4 M17.4 5.3 L20.7 19 H11" fill="none" stroke="#2d2d2d" stroke-width="2.2"/>
<path d="M31.4 10.5 Q32.5 12 31 14 L22 22.5 L19.5 20 L28.5 11 Q30 9.5 31.4 10.5 Z" fill="#fafafa" stroke="#2d2d2d" stroke-width="1.2"/>
<path d="M19.8 19.6 L22.4 22.2 Q22 25.5 18.5 27 Q15.5 28.3 13.2 28 Q13.3 25 15.5 22.5 Q17.5 20 19.8 19.6 Z" fill="#8fc0ef" stroke="#1f5fb8" stroke-width="1.4"/>
</svg>

<!-- Zeichen -->
<svg style="left:1444px;top:331px" width="12" height="8" viewBox="0 0 12 8"><path d="M1.5 1.5 L6 6 L10.5 1.5" fill="none" stroke="#444" stroke-width="1.4"/></svg>
<div class="t" style="left:1464px;top:326px;font-size:19px;color:#333">Zeichen</div>
<svg style="left:1804px;top:328px" width="15" height="15" viewBox="0 0 15 15"><path d="M6 1 H1 V14 H14 V9" fill="none" stroke="#444" stroke-width="1.5"/><path d="M8 1 H14 V7 M14 1 L6 9" fill="none" stroke="#444" stroke-width="1.5"/></svg>
<div class="combo" style="left:1444px;top:366px;width:223px;height:30px"><div class="btn" style="width:39px"></div></div>
<div class="tri" style="left:1642px;top:378px"></div>
<div class="t" style="left:1450px;top:373px;font-size:16.5px;color:#333">Carlito</div>
<div class="combo" style="left:1672px;top:366px;width:109px;height:30px"><div class="btn" style="width:39px"></div></div>
<div class="tri" style="left:1756px;top:378px"></div>
<div class="t" style="left:1680px;top:373px;font-size:16.5px;color:#333">12 pt</div>
<!-- row B I U -->
<div class="t" style="left:1451.5px;top:408.1px;font-size:24.4px;font-weight:bold;color:#3c3c3c;-webkit-text-stroke:0.4px #3c3c3c;transform-origin:0 0;transform:scaleX(0.966)">B</div>
<svg style="left:1498px;top:411px" width="9.5" height="18" viewBox="0 0 9.5 18"><path d="M7.3 1 L2.6 17.0 M3.1 1 H9.5 M0 17.0 H6.4" fill="none" stroke="#3c3c3c" stroke-width="2"/></svg>
<svg style="left:1535px;top:411px" width="17" height="21" viewBox="0 0 17 21"><path d="M2.5 0.5 V10.5 Q2.5 16.5 8.5 16.5 Q14.5 16.5 14.5 10.5 V0.5" fill="none" stroke="#3c3c3c" stroke-width="1.9"/><path d="M1 19.8 H16" stroke="#2a88d6" stroke-width="1.6"/></svg>
<div class="tri" style="left:1566px;top:417px"></div>
<svg style="left:1595px;top:412px" width="18" height="16.5" viewBox="0 0 18 16.5"><path d="M13.9 3.3 Q12.9 1 9.1 1 Q4.5 1 4.5 4.5 Q4.5 7.4 9.1 8.2 Q13.6 9.2 13.6 12.4 Q13.6 15.5 9.1 15.5 Q4.7 15.5 3.7 13.2" fill="none" stroke="#3c3c3c" stroke-width="1.8"/><path d="M0 7.0 H18" stroke="#2a88d6" stroke-width="1.6"/></svg>
<div class="t" style="left:1638.2px;top:408.0px;font-size:26.5px;font-weight:bold;color:#2a88d6;transform-origin:0 0;transform:scaleX(0.910)">A</div><div class="t" style="left:1636.7px;top:407.2px;font-size:26.5px;font-weight:bold;color:#3c3c3c;transform-origin:0 0;transform:scaleX(0.910)">A</div>
<svg style="left:1673px;top:405px" width="34" height="34" viewBox="0 0 34 34">
<path d="M7.9 21.4 L15.2 6.2 H17.6 L20 18 M11.4 16.2 H19.7" fill="none" stroke="#333" stroke-width="2"/>
<path d="M4.8 25.5 H13.8" stroke="#333" stroke-width="1.6"/>
<path d="M14.8 24.9 L24.5 16.2 L29 20.5 L19 29.7 Z" fill="#f79aa0" stroke="#e0302a" stroke-width="1.1" stroke-linejoin="round"/>
<path d="M14.8 24.9 L19.6 20.6 L24 25.1 L19 29.7 Z" fill="#d9281f"/>
</svg>
<svg style="left:1722px;top:406px" width="23" height="25" viewBox="0 0 23 25"><path d="M1 22 L8.3 5.5 H9.7 L17 22 M4 16 H14" fill="none" stroke="#3c3c3c" stroke-width="1.8"/><path d="M19.5 12 V1.5 M16.5 4.5 L19.5 1.5 L22.5 4.5" fill="none" stroke="#2a88d6" stroke-width="1.4"/></svg>
<svg style="left:1762px;top:407px" width="23" height="25" viewBox="0 0 23 25"><path d="M1 22.5 L6.3 10 H7.7 L13 22.5 M3.2 18 H11" fill="none" stroke="#3c3c3c" stroke-width="1.7"/><path d="M18.5 1 V12 M15.5 9 L18.5 12 L21.5 9" fill="none" stroke="#2a88d6" stroke-width="1.4"/></svg>
<!-- row 2 -->
<svg style="left:1449px;top:456px" width="26" height="29" viewBox="0 0 26 29"><path d="M6.2 18.6 L12.2 2.6 H13.6 L19.6 18.6 M8.5 13 H17.3" fill="none" stroke="#3c3c3c" stroke-width="2"/><rect x="0.5" y="24" width="25" height="4.6" rx="2.3" fill="#000"/></svg>
<div class="tri" style="left:1485px;top:466px"></div>
<svg style="left:1500.6px;top:452.3px" width="34" height="34" viewBox="0 0 34 34">
<rect x="6.6" y="3.8" width="17.2" height="13" rx="1.6" fill="#f7962e"/>
<text x="7.3" y="15" font-family="Liberation Sans" font-size="12.5" fill="#fdf3ea" textLength="14" lengthAdjust="spacingAndGlyphs">ab</text>
<path d="M26.5 8.2 L30 11.5 L21.2 19.8 L17.8 16.5 Z" fill="#fafafa" stroke="#444" stroke-width="1.3" stroke-linejoin="round"/>
<path d="M17.6 16.7 L21 19.9 L14.4 22 Z" fill="#333" stroke="#333" stroke-width="0.8" stroke-linejoin="round"/>
<rect x="6.4" y="28.3" width="24.2" height="4" rx="2" fill="#f6f6f6" stroke="#adadad" stroke-width="1.1"/>
</svg>
<div class="tri" style="left:1542px;top:466px"></div>
<svg style="left:1562px;top:456px" width="27" height="26" viewBox="0 0 27 26"><path d="M1.3 16 L6.5 1.3 H7.5 L12.7 16 M3.4 10.5 H10.6 M13.8 1.3 L19 16 H20 L25.2 1.3" fill="none" stroke="#3c3c3c" stroke-width="1.9"/><path d="M2 22 H25 M5 19 L2 22 L5 25 M22 19 L25 22 L22 25" fill="none" stroke="#2a88d6" stroke-width="1.4"/></svg>
<div class="tri" style="left:1599px;top:466px"></div>
<svg style="left:1676px;top:456px" width="30" height="30" viewBox="0 0 30 30">
<text x="0.3" y="13.3" font-family="Liberation Sans" font-size="14.5" textLength="27.6" lengthAdjust="spacingAndGlyphs" fill="#3c3c3c">abc</text>
<text x="0.3" y="27.4" font-family="Liberation Sans" font-size="14.5" fill="#3c3c3c">d</text>
<path d="M27.5 16 Q27.5 21 21 21 H14.5 M18 17.5 L14.5 21 L18 24.5" fill="none" stroke="#2a88d6" stroke-width="1.5"/>
</svg>
<svg style="left:1723.3px;top:463.5px" width="19.7" height="16.7" viewBox="0 0 19.7 16.7"><path d="M0.8 0 L8.9 12.7 M8.9 0 L0.8 12.7" fill="none" stroke="#3c3c3c" stroke-width="1.9"/><text x="11.2" y="5.2" font-family="Liberation Sans" font-weight="bold" font-size="11.5" fill="#2a88d6">2</text></svg>
<svg style="left:1763.6px;top:463.5px" width="19.7" height="16.7" viewBox="0 0 19.7 16.7"><path d="M0.8 0 L8.9 12.7 M8.9 0 L0.8 12.7" fill="none" stroke="#3c3c3c" stroke-width="1.9"/><text x="11.2" y="16.5" font-family="Liberation Sans" font-weight="bold" font-size="11.5" fill="#2a88d6">2</text></svg>
<!-- Absatz -->
<svg style="left:1444px;top:520px" width="12" height="8" viewBox="0 0 12 8"><path d="M1.5 1.5 L6 6 L10.5 1.5" fill="none" stroke="#444" stroke-width="1.4"/></svg>
<div class="t" style="left:1464px;top:515px;font-size:19px;color:#333">Absatz</div>
<svg style="left:1804px;top:517px" width="15" height="15" viewBox="0 0 15 15"><path d="M6 1 H1 V14 H14 V9" fill="none" stroke="#444" stroke-width="1.5"/><path d="M8 1 H14 V7 M14 1 L6 9" fill="none" stroke="#444" stroke-width="1.5"/></svg>
<div class="a" style="left:1444px;top:555px;width:37px;height:37px;background:#cdcdcd;border-radius:4px"></div>
<svg style="left:1449px;top:560px" width="25" height="26" viewBox="0 0 25 26"><g stroke="#3c3c3c" stroke-width="1.7"><path d="M1 1.5 H24 M1 6 H14 M1 11.5 H24 M1 16 H14 M1 21 H24 M1 25 H14"/></g></svg>
<svg style="left:1490px;top:560px" width="25" height="26" viewBox="0 0 25 26"><g stroke="#3c3c3c" stroke-width="1.7"><path d="M1 1.5 H24 M5.5 6 H19.5 M1 11.5 H24 M5.5 16 H19.5 M1 21 H24 M5.5 25 H19.5"/></g></svg>
<svg style="left:1531px;top:560px" width="25" height="26" viewBox="0 0 25 26"><g stroke="#3c3c3c" stroke-width="1.7"><path d="M1 1.5 H24 M10 6 H24 M1 11.5 H24 M10 16 H24 M1 21 H24 M10 25 H24"/></g></svg>
<svg style="left:1572px;top:560px" width="25" height="26" viewBox="0 0 25 26"><g stroke="#3c3c3c" stroke-width="1.7"><path d="M1 1.5 H24 M1 6 H24 M1 11.5 H24 M1 16 H24 M1 21 H24 M1 25 H24"/></g></svg>
<div class="a" style="left:1727px;top:555px;width:37px;height:37px;background:#cdcdcd;border-radius:4px"></div>
<svg style="left:1731px;top:560px" width="26" height="26" viewBox="0 0 28 28"><path d="M16.2 1.3 Q6.8 1.3 6.8 8.7 Q6.8 16 16.2 16 Z" fill="#3c3c3c"/><path d="M16 2 V26.1 M19.9 2 V26.1" stroke="#4f4f4f" stroke-width="1.8"/><path d="M16 2.1 H25.4" stroke="#3c3c3c" stroke-width="2.2"/><path d="M0.3 20.7 H11.3 M6.3 15.7 L11.3 20.7 L6.3 25.7" fill="none" stroke="#2a88d6" stroke-width="1.5"/></svg>
<svg style="left:1772px;top:560px" width="26" height="26" viewBox="0 0 28 28"><path d="M10.4 1.3 Q0.9 1.3 0.9 8.7 Q0.9 16 10.4 16 Z" fill="#3c3c3c"/><path d="M10.1 2 V26.1 M14.1 2 V26.1" stroke="#4f4f4f" stroke-width="1.8"/><path d="M10.1 2.1 H19.9" stroke="#3c3c3c" stroke-width="2.2"/><path d="M15.1 20.7 H25.9 M20.1 15.7 L15.1 20.7 L20.1 25.7" fill="none" stroke="#2a88d6" stroke-width="1.5"/></svg>
<!-- lists row -->
<svg style="left:1449px;top:609px" width="27" height="29" viewBox="0 0 27 29"><g fill="#9ccbf2" stroke="#1f72c8" stroke-width="1.4"><circle cx="3" cy="3.5" r="1.9"/><circle cx="3" cy="13.5" r="1.9"/><circle cx="3" cy="23.5" r="1.9"/></g><g stroke="#3c3c3c" stroke-width="1.5"><path d="M7 2 H24 M7 6 H16 M7 12 H24 M7 16 H16 M7 22 H24 M7 26 H16"/></g></svg>
<div class="tri" style="left:1485px;top:619px"></div>
<svg style="left:1509px;top:609px" width="27" height="29" viewBox="0 0 27 29"><text x="0" y="9" font-family="Liberation Sans" font-size="9" fill="#2a88d6">1</text><text x="0" y="19" font-family="Liberation Sans" font-size="9" fill="#2a88d6">2</text><text x="0" y="28.5" font-family="Liberation Sans" font-size="9" fill="#2a88d6">3</text><g stroke="#3c3c3c" stroke-width="1.5"><path d="M7 2 H25 M7 6 H17 M7 12 H25 M7 16 H17 M7 22 H25 M7 26 H17"/></g></svg>
<div class="tri" style="left:1545px;top:619px"></div>
<svg style="left:1571px;top:609px" width="26" height="29" viewBox="0 0 26 29"><text x="0" y="9" font-family="Liberation Sans" font-size="9" fill="#2a88d6">1</text><circle cx="5" cy="14" r="1.5" fill="#2a88d6"/><g stroke="#3c3c3c" stroke-width="1.5"><path d="M7 2 H25 M7 6 H17 M10 12 H25 M10 16 H20 M14 22 H25 M14 26 H20"/></g></svg>
<div class="tri" style="left:1606px;top:619px"></div>
<svg style="left:1753.5px;top:606px" width="34" height="34" viewBox="0 0 34 34">
<path d="M10.4 11 L20 9 L23.8 17.3 L15.9 21.1 Z" fill="#fafafa" stroke="#555" stroke-width="1.3" stroke-linejoin="round"/>
<path d="M16.9 12.3 Q17 5.2 19.2 5.2 Q21.4 5.2 21.4 10.4" fill="none" stroke="#555" stroke-width="1.3"/>
<path d="M7.9 18.5 Q7.6 10.2 13.1 9.6" fill="none" stroke="#1f6fc0" stroke-width="3"/>
<rect x="5.2" y="28.4" width="24" height="3.8" rx="1.9" fill="#fafafa" stroke="#b0b0b0" stroke-width="1"/>
</svg>
<div class="tri" style="left:1793px;top:620px"></div>
<!-- Abstand / Einzug -->
<div class="t" style="left:1443px;top:660px;font-size:15px;color:#333">Abstand:</div>
<div class="t" style="left:1641px;top:660px;font-size:15px;color:#333">Einzug:</div>
<svg style="left:1449px;top:693px" width="28" height="29" viewBox="0 0 28 29"><g stroke="#3c3c3c" stroke-width="1.6"><path d="M1 4 H13 M1 8 H13 M1 21 H13 M1 25 H13"/></g><path d="M20.5 12 V1.5 M16.5 5.5 L20.5 1.5 L24.5 5.5 M20.5 17 V27.5 M16.5 23.5 L20.5 27.5 L24.5 23.5" fill="none" stroke="#2a88d6" stroke-width="1.5"/></svg>
<svg style="left:1490px;top:693px" width="28" height="29" viewBox="0 0 28 29"><g stroke="#a0a0a0" stroke-width="1.4"><path d="M1 8 H13 M1 12 H13 M1 16 H13 M1 20 H13"/><path d="M20.5 1 V11.5 M16.5 7.5 L20.5 11.5 L24.5 7.5 M20.5 28 V17.5 M16.5 21.5 L20.5 17.5 L24.5 21.5" fill="none"/></g></svg>
<svg style="left:1646px;top:693px" width="29" height="29" viewBox="0 0 29 29"><g stroke="#3c3c3c" stroke-width="1.5"><path d="M3.8 1.3 H28 M16.8 7.8 H28 M16.8 14.3 H28 M16.8 20.8 H28 M3.8 26.7 H28"/></g><path d="M0.6 14.3 H10.7 M7 10.5 L10.7 14.3 L7 18.1" fill="none" stroke="#2a88d6" stroke-width="1.5"/></svg>
<svg style="left:1687px;top:693px" width="29" height="29" viewBox="0 0 29 29"><g stroke="#3c3c3c" stroke-width="1.5"><path d="M4 1.3 H28.2 M17 7.8 H28.2 M17 14.3 H28.2 M17 20.8 H28.2 M4 26.7 H28.2"/></g><path d="M0.6 14.3 H10.8 M4.3 10.5 L0.6 14.3 L4.3 18.1" fill="none" stroke="#2a88d6" stroke-width="1.5"/></svg>
<svg style="left:1728px;top:693px" width="29" height="29" viewBox="0 0 29 29"><g stroke="#3c3c3c" stroke-width="1.5"><path d="M4 1.3 H28.3 M17 7.8 H28.3 M17 14.3 H28.3 M17 20.8 H28.3 M4 26.7 H28.3"/></g><path d="M0.6 14.3 H11 M7.3 10.5 L11 14.3 L7.3 18.1" fill="none" stroke="#2a88d6" stroke-width="1.5"/></svg>
<!-- spin boxes left -->
<svg style="left:1451px;top:739px" width="20" height="18" viewBox="0 0 20 18"><path d="M7 1 H13 M10 1 V10 M7 10 H13" fill="none" stroke="#2a88d6" stroke-width="1.4"/><path d="M1 13.5 H19 M1 17 H19" stroke="#3c3c3c" stroke-width="1.4"/></svg>
<div class="spin a" style="left:1485px;top:732px;width:108px;height:34px;background:#e9e9e9;border:1px solid #c8c8c8;border-radius:5px"></div>
<div class="t" style="left:1491px;top:741px;font-size:16px;color:#333">0</div>
<div class="t" style="left:1532px;top:741px;font-size:16px;color:#333">cm</div>
<div class="a" style="left:1573px;top:733px;width:19px;height:32px;background:#efefef;border-radius:0 4px 4px 0"></div><svg style="left:1577px;top:735px" width="13" height="27" viewBox="0 0 13 27"><path d="M1 7 L6.5 1.5 L12 7 Z M1 19.5 L6.5 25 L12 19.5 Z" fill="#b0b0b0"/></svg>
<svg style="left:1451px;top:778px" width="20" height="19" viewBox="0 0 20 19"><path d="M1 1.5 H19 M1 5 H19" stroke="#3c3c3c" stroke-width="1.4"/><path d="M7 8 H13 M10 8 V17.5 M7 17.5 H13" fill="none" stroke="#2a88d6" stroke-width="1.4"/></svg>
<div class="a" style="left:1485px;top:771px;width:108px;height:34px;background:#e9e9e9;border:1px solid #c8c8c8;border-radius:5px"></div>
<div class="t" style="left:1491px;top:781px;font-size:16px;color:#333">0</div>
<div class="t" style="left:1532px;top:781px;font-size:16px;color:#333">cm</div>
<div class="a" style="left:1573px;top:772px;width:19px;height:32px;background:#efefef;border-radius:0 4px 4px 0"></div><svg style="left:1577px;top:774px" width="13" height="27" viewBox="0 0 13 27"><path d="M1 7 L6.5 1.5 L12 7 Z M1 19.5 L6.5 25 L12 19.5 Z" fill="#b0b0b0"/></svg>
<svg style="left:1447px;top:816px" width="28" height="28" viewBox="0 0 28 28">
<path d="M6.3 1.8 V12.3 M1 7.1 L6.3 1.8 L11.6 7.1 M6.3 15.7 V25.8 M1 20.5 L6.3 25.8 L11.6 20.5" fill="none" stroke="#3a8fd9" stroke-width="1.5"/>
<g stroke="#555" stroke-width="1.7"><path d="M13.6 6.9 H27.1 M13.6 12.1 H27.1 M13.6 17.2 H27.1 M13.6 22.1 H27.1"/></g>
</svg>
<div class="tri" style="left:1485px;top:826px"></div>
<!-- spin boxes right -->
<svg style="left:1648px;top:740px" width="22" height="16" viewBox="0 0 22 16"><path d="M1 4 V12 M1 8 H9 M9 4 V12" fill="none" stroke="#2a88d6" stroke-width="1.4"/><path d="M12 4 H21 M12 8 H21 M12 12 H21 M1 15 H21" stroke="#3c3c3c" stroke-width="1.3"/></svg>
<div class="a" style="left:1683px;top:732px;width:109px;height:34px;background:#e9e9e9;border:1px solid #c8c8c8;border-radius:5px"></div>
<div class="t" style="left:1689px;top:741px;font-size:16px;color:#333">0</div>
<div class="t" style="left:1730px;top:741px;font-size:16px;color:#333">cm</div>
<div class="a" style="left:1771px;top:733px;width:19px;height:32px;background:#efefef;border-radius:0 4px 4px 0"></div><svg style="left:1775px;top:735px" width="13" height="27" viewBox="0 0 13 27"><path d="M1 7 L6.5 1.5 L12 7 Z M1 19.5 L6.5 25 L12 19.5 Z" fill="#b0b0b0"/></svg>
<svg style="left:1648px;top:781px" width="22" height="16" viewBox="0 0 22 16"><path d="M1 4 H10 M1 8 H10 M1 12 H10" stroke="#3c3c3c" stroke-width="1.3"/><path d="M12 4 V12 M12 8 H20 M20 4 V12" fill="none" stroke="#2a88d6" stroke-width="1.4"/></svg>
<div class="a" style="left:1683px;top:772px;width:109px;height:34px;background:#e9e9e9;border:1px solid #c8c8c8;border-radius:5px"></div>
<div class="t" style="left:1689px;top:782px;font-size:16px;color:#333">0</div>
<div class="t" style="left:1730px;top:782px;font-size:16px;color:#333">cm</div>
<div class="a" style="left:1771px;top:773px;width:19px;height:32px;background:#efefef;border-radius:0 4px 4px 0"></div><svg style="left:1775px;top:775px" width="13" height="27" viewBox="0 0 13 27"><path d="M1 7 L6.5 1.5 L12 7 Z M1 19.5 L6.5 25 L12 19.5 Z" fill="#b0b0b0"/></svg>
<svg style="left:1648px;top:820px" width="22" height="18" viewBox="0 0 22 18"><path d="M1 1 V7 M1 4 H9 M9 1 V7" fill="none" stroke="#2a88d6" stroke-width="1.3"/><path d="M11 4 H17 M1 9.5 H17 M1 13 H13 M1 16.5 H17" stroke="#3c3c3c" stroke-width="1.3"/></svg>
<div class="a" style="left:1683px;top:813px;width:109px;height:34px;background:#e9e9e9;border:1px solid #c8c8c8;border-radius:5px"></div>
<div class="t" style="left:1689px;top:823px;font-size:16px;color:#333">0</div>
<div class="t" style="left:1730px;top:823px;font-size:16px;color:#333">cm</div>
<div class="a" style="left:1771px;top:814px;width:19px;height:32px;background:#efefef;border-radius:0 4px 4px 0"></div><svg style="left:1775px;top:816px" width="13" height="27" viewBox="0 0 13 27"><path d="M1 7 L6.5 1.5 L12 7 Z M1 19.5 L6.5 25 L12 19.5 Z" fill="#b0b0b0"/></svg>
<!-- status bar -->
<div class="a" style="left:10px;top:937px;width:1829px;height:38px;background:#f1f1f0;border-top:1px solid #dadada;border-radius:0 0 10px 10px"></div>
<div class="a" style="left:16px;top:943px;width:250px;height:27px;background:#fff;border:1px solid #cfcfcf;border-radius:6px"></div>
<div class="t" style="left:23px;top:949px;font-size:15px;color:#333">Suchen</div>
<svg style="left:279px;top:949px" width="17" height="14" viewBox="0 0 17 14"><path d="M1.5 12 L8.5 4 L15.5 12" fill="none" stroke="#c2c2c2" stroke-width="2.2"/></svg>
<svg style="left:320px;top:949px" width="18" height="14" viewBox="0 0 18 14"><path d="M1.5 2 L9 10 L16.5 2" fill="none" stroke="#c2c2c2" stroke-width="2.2"/></svg>
<div class="sep" style="left:354px;top:948px;height:17px;background:#d0d0d0"></div>
<div class="t" style="left:368px;top:949px;font-size:14.7px;color:#555">Seite 1 von 1</div>
<div class="sep" style="left:468px;top:948px;height:17px;background:#d0d0d0"></div>
<div class="t" style="left:481px;top:949px;font-size:14.7px;color:#555;transform-origin:0 0;transform:scaleX(1.025)">279 Wörter, 1.711 Zeichen</div>
<div class="sep" style="left:671px;top:948px;height:17px;background:#d0d0d0"></div>
<div class="t" style="left:681px;top:949px;font-size:14.7px;color:#555;transform-origin:0 0;transform:scaleX(1.025)">Deutsch (Deutschland)</div>
<div class="tri" style="left:842px;top:954px;border-left-width:5px;border-right-width:5px;border-top-width:6px;border-top-color:#555"></div>
<div class="sep" style="left:864px;top:948px;height:17px;background:#d0d0d0"></div>
<!-- right status icons -->
<svg style="left:1555px;top:947px" width="20" height="18" viewBox="0 0 20 18"><path d="M1 5 V11 H6 M19 5 V11 H14" fill="none" stroke="#555" stroke-width="1.5"/><path d="M10 11 V1.5 M6.5 5 L10 1.5 L13.5 5" fill="none" stroke="#2a88d6" stroke-width="1.5"/><path d="M1 16.5 H19" stroke="#aaa" stroke-width="1.5"/></svg>
<svg style="left:1597px;top:949px" width="20" height="18" viewBox="0 0 20 18"><path d="M1 1.5 H19" stroke="#aaa" stroke-width="1.5"/><path d="M1 13 V7 H6 M19 13 V7 H14" fill="none" stroke="#555" stroke-width="1.5"/><path d="M10 7 V16.5 M6.5 13 L10 16.5 L13.5 13" fill="none" stroke="#2a88d6" stroke-width="1.5"/></svg>
<div class="sep" style="left:1632px;top:948px;height:17px;background:#d0d0d0"></div>
<svg style="left:1647px;top:948px" width="21" height="19" viewBox="0 0 21 19"><circle cx="9" cy="9" r="8" fill="none" stroke="#444" stroke-width="1.4"/><path d="M14.5 14.5 L19 18.5" stroke="#444" stroke-width="2"/><path d="M7 6 L9.7 4 V14" fill="none" stroke="#2a88d6" stroke-width="1.4"/></svg>
<div class="a" style="left:1692px;top:956.3px;width:13px;height:1.6px;background:#333"></div>
<div class="t" style="left:1727px;top:949px;font-size:14.7px;color:#777">100%</div>
<div class="tri" style="left:1773px;top:954px;border-left-width:5px;border-right-width:5px;border-top-width:6px;border-top-color:#666"></div>
<div class="a" style="left:1805px;top:956.5px;width:13px;height:1.7px;background:#222"></div>
<div class="a" style="left:1810.7px;top:950.7px;width:1.7px;height:13.3px;background:#222"></div>
</body></html>
